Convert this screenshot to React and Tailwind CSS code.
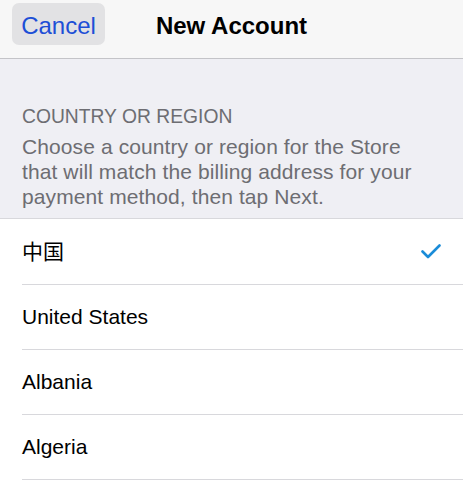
const COUNTRIES = [
  { name: '中国', selected: true },
  { name: 'United States' },
  { name: 'Albania' },
  { name: 'Algeria' },
];

function Check() {
  return (
    <svg width="20" height="15" viewBox="0 0 20 15" fill="none">
      <path d="M1.5 7.5 L7 13 L18.5 1.5" stroke="#1a8cd8" strokeWidth="2.6" strokeLinecap="round" strokeLinejoin="round" />
    </svg>
  );
}

export default function App() {
  return (
    <div className="w-[463px] h-[480px] overflow-hidden bg-[#efeff4] font-['Liberation_Sans','Noto_Sans_CJK_SC',sans-serif]">
      {/* Nav bar */}
      <div className="relative h-[59px] bg-[#f7f7f7] border-b border-[#c4c4c8] flex items-start">
        <button className="mt-[3px] ml-3 h-[42px] w-[93px] pt-[3px] rounded-[7px] bg-[#e2e2e4] text-[24px] text-[#1d4fd6] flex items-center justify-center">
          Cancel
        </button>
        <div className="absolute left-0 right-0 top-[8px] leading-[36px] text-center text-[24px] font-bold text-black">
          New Account
        </div>
      </div>

      {/* Section header */}
      <div className="px-[22px] pt-[46px] pb-[9px] text-[#6d6d72]">
        <div className="text-[19.3px] leading-[24px]">COUNTRY OR REGION</div>
        <div className="mt-[5px] text-[21px] leading-[25px] tracking-[0.1px]">
          Choose a country or region for the Store that will match the billing address for your payment method, then tap Next.
        </div>
      </div>

      {/* List */}
      <div className="bg-white border-t border-[#d8d8dc]">
        {COUNTRIES.map((c, i) => (
          <div key={c.name} className="pl-[22px]">
            <div className={`${i === 0 ? 'h-[66px]' : 'h-[65px]'} flex items-center justify-between pr-[22px] border-b border-[#d8d8dc] text-[21px] text-black`}>
              <span>{c.name}</span>
              {c.selected && <Check />}
            </div>
          </div>
        ))}
      </div>
    </div>
  );
}
